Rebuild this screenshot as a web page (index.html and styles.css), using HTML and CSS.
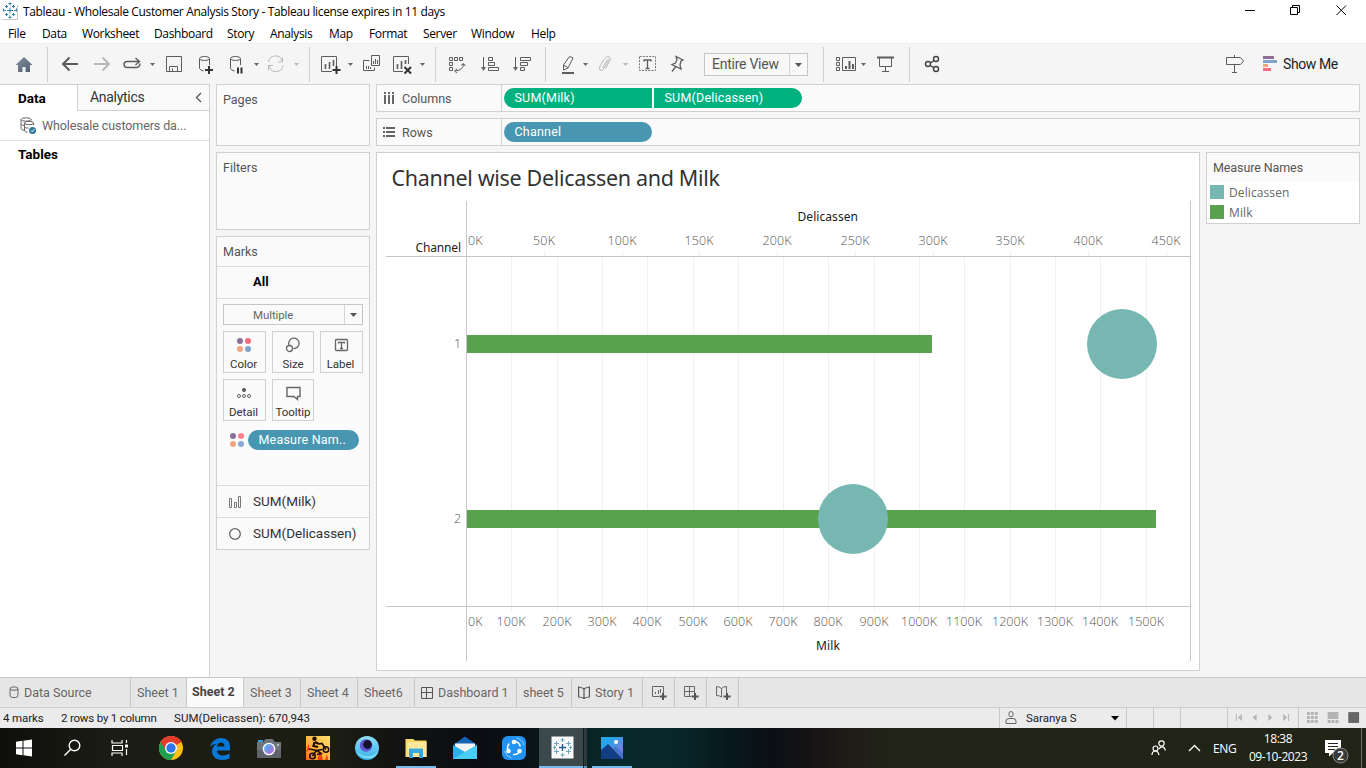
FILE: index.html
```html
<!DOCTYPE html>
<html lang="en">
<head>
<meta charset="utf-8">
<title>Tableau - Wholesale Customer Analysis Story</title>
<link rel="stylesheet" href="styles.css">
</head>
<body>
<div class="app">
  <header class="titlebar">
    <svg class="app-logo" width="16" height="18" viewBox="0 0 16 18"><path d="M.5 17.500h15V3" fill="none" stroke="#c8c8c8"/><path d="M7 6v6M4 9h6M7 1v3M7 14v3M1 9h2M11 9h2.500M3.500 3.500v3M2 5h3M10.500 3.500v3M9 5h3M3.500 11.500v3M2 13h3M10.500 11.500v3M9 13h3M5.500 2h3M5.500 16h3M.5 7v3M13.500 7v3" transform="translate(1 -.5)" stroke="#2f7fae" fill="none"/></svg>
    <span class="title-text">Tableau - Wholesale Customer Analysis Story - Tableau license expires in 11 days</span>
    <svg class="win-buttons" width="116" height="24" viewBox="1240 0 116 24" fill="none" stroke="#000"><path d="M1245 10.500h10"/><path d="M1290.500 7.500h7v7h-7zM1292.500 7.500v-2h7v7h-2M1336.500 5.500l9.500 9.500M1346 5.500l-9.500 9.500"/></svg>
  </header>
  <nav class="menubar"><span>File</span><span>Data</span><span>Worksheet</span><span>Dashboard</span><span>Story</span><span>Analysis</span><span>Map</span><span>Format</span><span>Server</span><span>Window</span><span>Help</span></nav>

  <div class="toolbar">
    <svg width="47" height="40" viewBox="0 44 47 40"><defs><linearGradient id="home" x1="0" y1="0" x2="1" y2="1"><stop offset="0" stop-color="#8492a3"/><stop offset="1" stop-color="#525d6d"/></linearGradient></defs><path d="M24 57l8.500 8H30v7h-4.500v-5h-3v5H18v-7h-2.500z" fill="url(#home)"/></svg>
    <i class="sep"></i>
    <svg class="ico" width="38" height="40" viewBox="48 44 38 40"><path d="M78 64H63M69.500 57.500L63 64l6.500 6.500" stroke-width="2"/></svg>
    <svg class="ico off" width="31" height="40" viewBox="86 44 31 40"><path d="M94 64h15M102.500 57.500L109 64l-6.500 6.500" stroke-width="2"/></svg>
    <svg class="ico" width="41" height="40" viewBox="117 44 41 40"><path d="M133 67.500h3.500a4 4 0 0 0 3.500-4M139 61.500h-12a3 3 0 0 0 0 6h8M135.500 58l4 3.500-4 3.500" stroke-width="1.400"/><path class="caret" d="M150 63h5l-2.500 3z"/></svg>
    <svg class="ico" width="32" height="40" viewBox="158 44 32 40"><path d="M166.500 56.500h15v15h-15zM169.500 71v-4.500h8V71M172.500 68.500V71"/></svg>
    <svg class="ico" width="30" height="40" viewBox="190 44 30 40"><ellipse cx="204.500" cy="58.500" rx="5" ry="2"/><path d="M199.500 58.500v10q1 2 4 2.500M209.500 58.500V65"/><path class="plus" d="M209 66v8M205 70h8"/></svg>
    <svg class="ico" width="42" height="40" viewBox="220 44 42 40"><ellipse cx="235.500" cy="58.500" rx="5" ry="2"/><path d="M230.500 58.500v10q1 2 4 2.500M240.500 58.500V65"/><path class="plus" d="M238 67.500v6M241.500 67.500v6"/><path class="caret" d="M254 63h5l-2.500 3z"/></svg>
    <svg class="ico off" width="47" height="40" viewBox="262 44 47 40"><path d="M268.500 62a7 7 0 0 1 13.500-1.500l.5 1M282.500 57.500v4.500h-4.500M283 65.500a7 7 0 0 1-13.500 1.500l-.5-1M268.500 70v-4.500h4.500"/><path class="caret" d="M294 63h5l-2.500 3z"/></svg>
    <i class="sep"></i>
    <svg class="ico" width="47" height="40" viewBox="310 44 47 40"><path d="M332 71.500h-10.500v-15h15V66"/><path d="M325.500 64v5M329.500 62v7M333.500 60v6" stroke-width="1.600"/><path class="plus" d="M336.500 66v8M332.500 70h8"/><path class="caret" d="M348 63h5l-2.500 3z"/></svg>
    <svg class="ico" width="30" height="40" viewBox="357 44 30 40"><path d="M371.500 55.500h8v10h-8zM369.500 60.500h-6v10h11v-3M366.500 66v3M368.500 66v3M370.500 67v2M373.500 61v3M375.500 59v5M377.500 60v4" /></svg>
    <svg class="ico" width="48" height="40" viewBox="387 44 48 40"><path d="M403 71.500h-9.500v-15h15V64"/><path d="M397.500 64v5M401.500 61v8M405.500 60v4" stroke-width="1.600"/><path class="plus" d="M404.500 67l6.500 6.500M411 67l-6.500 6.500"/><path class="caret" d="M420 63h5l-2.500 3z"/></svg>
    <i class="sep"></i>
    <svg class="ico" width="38" height="40" viewBox="436 44 38 40"><path d="M449.500 57.500h3v3h-3zM454.500 57.500h3v3h-3zM459.500 57.500h3v3h-3zM449.500 62.500h3v3h-3zM449.500 67.500h3v3h-3zM463.500 64q0 6-8 7M461 65.500l2.500-2 2 2.500M457 69l-2.500 2 2.500 2" /></svg>
    <svg class="ico" width="32" height="40" viewBox="474 44 32 40"><path d="M483.500 57v12M488.500 57.500h4v3h-4zM488.500 62.500h6v3h-6zM488.500 67.500h10v3h-10z"/><path class="caret" d="M481 67h5l-2.500 4z"/></svg>
    <svg class="ico" width="39" height="40" viewBox="506 44 39 40"><path d="M515.500 57v12M520.500 57.500h10v3h-10zM520.500 62.500h7v3h-7zM520.500 67.500h4v3h-4z"/><path class="caret" d="M513 67h5l-2.500 4z"/></svg>
    <i class="sep"></i>
    <svg class="ico" width="44" height="40" viewBox="546 44 44 40"><path d="M569.500 56.500l3.500 1.500-5 10-4.500 2v-5zM564 65.500l4 2"/><path d="M562 73h12" stroke-width="2"/><path class="caret" d="M583 63h5l-2.500 3z"/></svg>
    <svg class="ico off" width="42" height="40" viewBox="590 44 42 40"><path d="M602.500 68l5-8.500q1.500-1 1 1l-4.500 8q-2 3-4 1.500-1.500-1.500 0-4l4.500-7.500q3-3.500 5-1.500 2 1.500 0 4.500l-4 7"/><path class="caret" d="M623 63h5l-2.500 3z"/></svg>
    <svg class="ico" width="33" height="40" viewBox="632 44 33 40"><path d="M639.500 56.500h16v14h-16z" stroke-dasharray="2 1.200" stroke="#777"/><path d="M644 61.500v-1.500h7v1.500M647.500 60v8M645.500 68.500h4" stroke-width="1.300"/></svg>
    <svg class="ico" width="39" height="40" viewBox="665 44 39 40"><path d="M676 56.500l7 3.500-2 1-1 4 1 4-9-4.500 3.500-1.500 1.500-3.500zM675.500 67l-3.500 4.500" stroke-width="1.300"/></svg>
    <div class="fit-select"><span>Entire View</span><svg width="18" height="21" viewBox="0 0 18 21"><path d="M.5 0v21" stroke="#d4d4d4"/><path d="M6 9h7l-3.500 4z" fill="#555"/></svg></div>
    <i class="sep"></i>
    <svg class="ico" width="48" height="40" viewBox="824 44 48 40"><path d="M836.500 57.500h3v3h-3zM836.500 62.500h3v3h-3zM836.500 67.500h3v3h-3zM842.500 57.500h13v13h-13z"/><path d="M846 66v3M849.500 61v8M853 64v5" stroke-width="2"/><path class="caret" d="M861 63h5l-2.500 3z"/></svg>
    <svg class="ico" width="37" height="40" viewBox="872 44 37 40"><path d="M877 57.500h17" stroke-width="2"/><path d="M879.500 58v8.500h12V58M885.500 67v4.500M882 71.500h7" /></svg>
    <i class="sep"></i>
    <svg class="ico" width="40" height="40" viewBox="910 44 40 40"><g stroke-width="1.400" stroke="#444"><circle cx="928" cy="64" r="2.500"/><circle cx="936" cy="59" r="2.500"/><circle cx="936" cy="69" r="2.500"/><path d="M930.500 63l3.500-2.500M930.500 65.500l3.500 2.500"/></g></svg>
    <div class="show-me">
      <svg class="ico" width="20" height="40" viewBox="1225 44 20 40"><path d="M1226.500 57.500h14l3 3.500-3 3.500h-14zM1234.500 55v2M1234.500 65v7M1232 72.500h5"/></svg>
      <svg width="14" height="40" viewBox="1263 44 14 40"><path d="M1263 56h11v3h-11z" fill="#8b6f97"/><path d="M1263 60h14v3h-14z" fill="#7fa3cb"/><path d="M1263 64h5v3h-5z" fill="#f2a57f"/><path d="M1263 68h8v3h-8z" fill="#f56d7c"/></svg>
      <span>Show Me</span>
    </div>
  </div>

  <main class="workspace">
    <aside class="data-pane">
      <div class="pane-tabs">
        <span class="pane-tab active">Data</span>
        <span class="pane-tab">Analytics<svg width="7" height="12" viewBox="0 0 7 12"><path d="M6 1L1.500 5.500 6 10" fill="none" stroke="#555" stroke-width="1.300"/></svg></span>
      </div>
      <div class="source-row">
        <svg width="18" height="18" viewBox="19 116 18 18" fill="none" stroke="#666"><ellipse cx="26" cy="118.500" rx="5" ry="1.700"/><path d="M21 118.500v9q0 1.500 4 2M31 118.500v1M21 123q1 1.500 3 1.500"/><ellipse cx="29" cy="122" rx="4.500" ry="1.700"/><path d="M24.500 122v7q0 2 3 2.500M33.500 122v2M24.500 126q1 1.500 4 1"/><circle cx="32.500" cy="129.500" r="3.500" fill="#2c7a9e" stroke="none"/><path d="M31 129.500l1.200 1.200 2-2.500" stroke="#fff"/></svg>
        <span>Wholesale customers da...</span>
      </div>
      <div class="tables-head">Tables</div>
    </aside>

    <section class="cards">
      <div class="card pages">Pages</div>
      <div class="card filters">Filters</div>
      <div class="card marks">
        <div class="marks-head">Marks</div>
        <div class="marks-all">All</div>
        <div class="marks-body">
          <div class="mark-type"><span>Multiple</span><svg width="18" height="19" viewBox="0 0 18 19"><path d="M.5 0v19" stroke="#d4d4d4"/><path d="M6 8h7l-3.500 4z" fill="#555"/></svg></div>
          <div class="mark-grid">
            <div class="mark-btn"><svg width="16" height="16" viewBox="0 0 16 16"><circle cx="4" cy="4" r="3" fill="#8b6f97"/><circle cx="12" cy="4" r="3" fill="#f56d7c"/><circle cx="4" cy="12" r="3" fill="#f2a57f"/><circle cx="12" cy="12" r="3" fill="#7fa3cb"/></svg><span>Color</span></div>
            <div class="mark-btn mid-col"><svg width="16" height="16" viewBox="0 0 16 16" fill="none" stroke="#666" stroke-width="1.300"><path d="M4 8A5.200 5.200 0 1 1 8.500 11.500"/><circle cx="4.500" cy="11.500" r="3"/></svg><span>Size</span></div>
            <div class="mark-btn"><svg width="16" height="16" viewBox="0 0 16 16" fill="none" stroke="#666"><rect x="2.500" y="2.500" width="12" height="11" rx="1" stroke-width="1.300"/><path d="M5.500 6.500V5.500h6v1M8.500 5.500v5.500M7 11.500h3" stroke-width="1.300"/></svg><span>Label</span></div>
            <div class="mark-btn"><svg width="16" height="16" viewBox="0 0 16 16" fill="none" stroke="#666"><circle cx="8" cy="5" r="2" fill="#555" stroke="none"/><circle cx="3" cy="11" r="1.500"/><circle cx="8" cy="11" r="1.500"/><circle cx="13" cy="11" r="1.500"/></svg><span>Detail</span></div>
            <div class="mark-btn mid-col"><svg width="16" height="16" viewBox="0 0 16 16" fill="none" stroke="#666" stroke-width="1.400"><path d="M2 2.500h13v9h-2.500v3L9 11.500H2z"/></svg><span>Tooltip</span></div>
          </div>
          <div class="mark-pill-row">
            <svg width="14" height="14" viewBox="1 1 14 14"><circle cx="4" cy="4" r="3" fill="#8b6f97"/><circle cx="12" cy="4" r="3" fill="#f8828d"/><circle cx="4" cy="12" r="3" fill="#f2a57f"/><circle cx="12" cy="12" r="3" fill="#8aaad2"/></svg>
            <span class="pill dim">Measure Nam..</span>
          </div>
        </div>
        <div class="marks-item"><svg width="14" height="14" viewBox="0 0 14 14" fill="none" stroke="#777"><path d="M.5 3.500h2v9h-2zM5.500 7.500h2v5h-2zM9.500 1.500h2v11h-2z"/></svg>SUM(Milk)</div>
        <div class="marks-item"><svg width="14" height="14" viewBox="0 0 14 14" fill="none" stroke="#666" stroke-width="1.300"><circle cx="6" cy="7" r="5.300"/></svg>SUM(Delicassen)</div>
      </div>
    </section>

    <section class="stage">
      <div class="shelf"><div class="shelf-name"><svg width="13" height="13" viewBox="0 0 13 13" fill="#666"><path d="M1 0h2v2H1zM1 3h2v9H1zM5 0h2v2H5zM5 3h2v9H5zM9 0h2v2H9zM9 3h2v9H9z"/></svg>Columns</div><span class="pill mea left">SUM(Milk)</span><span class="pill mea right">SUM(Delicassen)</span></div>
      <div class="shelf"><div class="shelf-name"><svg width="13" height="13" viewBox="0 0 13 13" fill="#666"><path d="M0 1h2v2H0zM3 1h9v2H3zM0 5h2v2H0zM3 5h9v2H3zM0 9h2v2H0zM3 9h9v2H3z"/></svg>Rows</div><span class="pill dim">Channel</span></div>
      <div class="view-row">
        <div class="view">
          <svg class="chart" width="822" height="517" viewBox="377 153 822 517">
            <text class="chart-title" x="391.500" y="186" textLength="328.500">Channel wise Delicassen and Milk</text>
            <path class="grid" d="M511.500 257v354M557.500 257v354M602.500 257v354M647.500 257v354M693.500 257v354M738.500 257v354M783.500 257v354M828.500 257v354M874.500 257v354M919.500 257v354M964.500 257v354M1010.500 257v354M1055.500 257v354M1100.500 257v354M1146.500 257v354"/>
            <path class="grid" d="M544.500 251v5M622.500 251v5M699.500 251v5M777.500 251v5M855.500 251v5M933.500 251v5M1010.500 251v5M1088.500 251v5M1166.500 251v5"/>
            <path class="axis" d="M466.500 201v460M1190.500 201v460M386 256.500h804M386 606.500h804"/>
            <g class="heading">
              <text x="415.500" y="252" textLength="45.500">Channel</text>
              <text x="797.500" y="221" textLength="60.500">Delicassen</text>
              <text x="816" y="650" textLength="24">Milk</text>
            </g>
            <g class="tick">
              <text x="454" y="348">1</text><text x="454" y="523">2</text>
              <text x="468" y="245" textLength="14.500">0K</text>
              <g class="mid">
                <text x="544" y="245" textLength="22">50K</text><text x="622" y="245" textLength="29">100K</text><text x="699" y="245" textLength="29">150K</text><text x="777" y="245" textLength="29">200K</text><text x="855" y="245" textLength="29">250K</text><text x="933" y="245" textLength="29">300K</text><text x="1010" y="245" textLength="29">350K</text><text x="1088" y="245" textLength="29">400K</text><text x="1166" y="245" textLength="29">450K</text>
                <text x="511" y="626" textLength="29">100K</text><text x="557" y="626" textLength="29">200K</text><text x="602" y="626" textLength="29">300K</text><text x="647" y="626" textLength="29">400K</text><text x="693" y="626" textLength="29">500K</text><text x="738" y="626" textLength="29">600K</text><text x="783" y="626" textLength="29">700K</text><text x="828" y="626" textLength="29">800K</text><text x="874" y="626" textLength="29">900K</text><text x="919" y="626" textLength="36">1000K</text><text x="964" y="626" textLength="36">1100K</text><text x="1010" y="626" textLength="36">1200K</text><text x="1055" y="626" textLength="36">1300K</text><text x="1100" y="626" textLength="36">1400K</text><text x="1146" y="626" textLength="36">1500K</text>
              </g>
              <text x="468" y="626" textLength="14.500">0K</text>
            </g>
            <path class="milk" d="M467 335h465v18H467zM467 510h689v18H467z"/>
            <circle class="delicassen" cx="1122" cy="344" r="35"/>
            <circle class="delicassen" cx="853" cy="519" r="35"/>
          </svg>
        </div>
        <div class="legend">
          <div class="legend-head">Measure Names</div>
          <div class="legend-row"><i class="swatch teal"></i>Delicassen</div>
          <div class="legend-row"><i class="swatch green"></i>Milk</div>
        </div>
      </div>
    </section>
  </main>

  <div class="sheet-tabs">
    <span class="source"><svg width="10" height="13" viewBox="0 0 10 13" fill="none" stroke="#666"><rect x="1" y="1" width="8" height="10.500" rx="2.500"/><path d="M1 3.500q4 1.600 8 0"/></svg>Data Source</span>
    <span>Sheet 1</span><span class="active">Sheet 2</span><span>Sheet 3</span><span>Sheet 4</span><span>Sheet6</span>
    <span class="dash"><svg width="12" height="12" viewBox="0 0 12 12" fill="none" stroke="#555" stroke-width="1"><path d="M.5.500h11v11H.5zM5.500.500v11M.5 5.500h11"/></svg>Dashboard 1</span>
    <span>sheet 5</span>
    <span class="dash"><svg width="12" height="13" viewBox="0 0 12 13" fill="none" stroke="#555" stroke-width="1.200"><path d="M.6 1q3.400.2 5.400 2 2-1.800 5.400-2v10Q8 11 6 12.500 4 11 .6 11zM6 3v9"/></svg>Story 1</span>
    <span class="new"><svg width="16" height="16" viewBox="0 0 16 16" fill="none" stroke="#666"><path d="M8 11.500H1.500v-10h11V8M4.500 7v2M7.500 5v4M9.500 4v4"/><path d="M12 8v7M8.500 11.500h7" stroke-width="2" stroke="#555"/></svg></span>
    <span class="new"><svg width="16" height="16" viewBox="0 0 16 16" fill="none" stroke="#666"><path d="M8 11.500H1.500v-10h10V8M6.500 1.500v10M1.500 6.500h10"/><path d="M12 8v7M8.500 11.500h7" stroke-width="2" stroke="#555"/></svg></span>
    <span class="new"><svg width="16" height="16" viewBox="0 0 16 16" fill="none" stroke="#666"><path d="M1.500 1.500q3 0 5 2 2-2 5-2V8M1.500 1.500v9q3 0 5 1.500M6.500 3.500V12"/><path d="M12 8v7M8.500 11.500h7" stroke-width="2" stroke="#555"/></svg></span>
  </div>

  <div class="statusbar">
    <span class="st-marks">4 marks</span><span class="st-rows">2 rows by 1 column</span><span class="st-sum">SUM(Delicassen): 670,943</span>
    <div class="user"><svg width="12" height="14" viewBox="0 0 12 14" fill="none" stroke="#666"><ellipse cx="6" cy="3.200" rx="2.200" ry="2.700"/><path d="M1 12.500V10q0-2.500 3-2.500h4q3 0 3 2.500v2.500z"/></svg><span>Saranya S</span><svg class="drop" width="8" height="5" viewBox="0 0 8 5"><path d="M0 0h8L4 4.500z"/></svg></div>
    <i class="cell c1"></i><i class="cell c1"></i><i class="cell c2"></i>
    <svg class="cell" width="71" height="20" viewBox="1228 708 71 20" fill="#b4b4b4"><path d="M1236 714h1v7h-1zM1242 714v7l-4-3.500zM1257 714v7l-4-3.500zM1269 714v7l4-3.500zM1284 714v7l4-3.500zM1289 714h1v7h-1z"/></svg>
    <svg class="cell" width="68" height="20" viewBox="1299 708 68 20" fill="#b4b4b4"><path d="M1307 712h3v3h-3zM1311 712h3v3h-3zM1315 712h3v3h-3zM1307 716h3v3h-3zM1311 716h3v3h-3zM1315 716h3v3h-3zM1307 720h3v3h-3zM1311 720h3v3h-3zM1315 720h3v3h-3zM1328 712h11v7h-11zM1328 720h3v3h-3zM1332 720h3v3h-3zM1336 720h3v3h-3z"/><path d="M1349 712h11v11h-11z" fill="#666"/></svg>
  </div>

  <footer class="taskbar">
    <svg width="49" height="40" viewBox="0 728 49 40" fill="#fff"><path d="M16 741.800l6.500-1v6.700H16zM23.500 740.700L32 739.500v8h-8.500zM16 748.500h6.500v6.700l-6.500-1zM23.500 748.500H32v8l-8.500-1.200z"/></svg>
    <svg width="48" height="40" viewBox="49 728 48 40" fill="none" stroke="#fff" stroke-width="1.400"><circle cx="74.500" cy="745.500" r="5.300"/><path d="M70.500 749.500l-6 6"/></svg>
    <svg width="49" height="40" viewBox="97 728 49 40" fill="none" stroke="#fff" stroke-width="1.200"><path d="M112 740v3h10v-3M112.500 745.500h10v5h-10zM112 756v-3h10v3M126.500 740v3M126.500 749v6"/><path d="M125 744.500h3v3h-3z" fill="#fff" stroke="none"/></svg>
    <svg width="49" height="40" viewBox="146 728 49 40"><circle cx="171" cy="748" r="12" fill="#fbc116"/><path d="M171 748L160.600 742A12 12 0 0 1 181.400 742z" fill="#e33b2e"/><path d="M160.600 742A12 12 0 0 0 171 760l5.500-9.500L171 748z" fill="#1fa050"/><path d="M171 742h10.400A12 12 0 0 0 160.600 742l5 8z" fill="#e33b2e"/><circle cx="171" cy="748" r="6" fill="#fff"/><circle cx="171" cy="748" r="4.700" fill="#2f77ea"/></svg>
    <svg width="49" height="40" viewBox="195 728 49 40"><path d="M210 746.500Q213 738 221.500 738q8.500.5 8.500 9v3.500h-13q.5 5 6 5 3 0 6.500-2v5Q226 760 221.500 760q-8.500-.5-9.500-8 0-6 5-8.500-4 .5-7 3zM217 746.500h7.500q0-4-3.500-4-3.500.3-4 4z" fill="#0879d9" fill-rule="evenodd"/></svg>
    <svg width="49" height="40" viewBox="244 728 49 40"><defs><linearGradient id="lens" x1="0" y1="0" x2="1" y2="1"><stop offset="0" stop-color="#43bdf0"/><stop offset="1" stop-color="#c062dd"/></linearGradient></defs><path d="M258 740h5v3h-5z" fill="#28a3d8"/><path d="M257 742h6l2.500-3h7l2.500 3h6v16h-24z" fill="#6d747a"/><path d="M257 750h24v8h-24z" fill="#5d646a"/><circle cx="269" cy="749" r="6.300" fill="#fff"/><circle cx="269" cy="749" r="4.900" fill="url(#lens)"/><path d="M277 744h2v2h-2z" fill="#bbb"/></svg>
    <svg width="49" height="40" viewBox="293 728 49 40"><defs><linearGradient id="bike" x1="1" y1="0" x2="0" y2="1"><stop offset="0" stop-color="#ffe36e"/><stop offset=".7" stop-color="#ffa62c"/><stop offset="1" stop-color="#f06a1a"/></linearGradient></defs><path d="M306 736h24v24h-24z" fill="url(#bike)"/><path d="M318 760q-1-5 4-8-1 4 1 8zM306 752l3-9 0 7zM325 760l2-6 1 6z" fill="#ee3f12"/><g stroke="#1c0c05" fill="none"><circle cx="312.500" cy="756" r="2.700" stroke-width="1.600"/><circle cx="326" cy="749.500" r="2.700" stroke-width="1.600"/><path d="M312.500 756l4-5.500 6-1M326 749.500l-4-6-3 .5M309 749l8 1.500 4 3-4 1" stroke-width="1.700"/><path d="M314.500 742l-1 4 4.500 1M315 742l4 2" stroke-width="2.200"/></g><circle cx="314.500" cy="738.800" r="2.200" fill="#1c0c05"/></svg>
    <svg width="49" height="40" viewBox="342 728 49 40"><defs><linearGradient id="swirl" x1="0" y1="0" x2="0" y2="1"><stop offset="0" stop-color="#8fdcf5"/><stop offset="1" stop-color="#36b2ea"/></linearGradient></defs><circle cx="367" cy="748" r="12" fill="url(#swirl)"/><path d="M357 752q6 5 13 4t8-7q0 8-8 9.500-9 .5-13-6.500z" fill="#7fdcf6"/><circle cx="366" cy="745.500" r="6.200" fill="#6156d8"/><circle cx="367.500" cy="744.500" r="4.400" fill="#15122e"/></svg>
    <svg width="49" height="40" viewBox="391 728 49 40"><path d="M405.500 739h8l1 1.500h12V757h-21z" fill="#fbd764"/><path d="M407.500 742h19V757h-19z" fill="#ffe89b"/><path d="M409 748.500h14V758h-4v-5h-6v5h-4z" fill="#35a8e0"/><path d="M396 766h40v2h-40z" fill="#76b9ed"/></svg>
    <svg width="49" height="40" viewBox="440 728 49 40"><path d="M453 745l12-8.500 12 8.500z" fill="#1565b5"/><path d="M455 743.500h20v9h-20z" fill="#f4f4f4"/><path d="M453 745l12 7 12-7v14h-24z" fill="#2bb0e8"/><path d="M453 759l24-14v14z" fill="#47cdf6"/></svg>
    <svg width="50" height="40" viewBox="489 728 50 40"><rect x="502" y="736" width="24" height="24" rx="6" fill="#2293f3"/><g fill="none" stroke="#fff"><circle cx="514" cy="748" r="6.500" stroke-width="1.600" stroke-dasharray="9 4.600" stroke-dashoffset="-2"/><path d="M504.500 751a10 10 0 0 0 7 7M516.500 738a10 10 0 0 1 7.500 7" stroke="#8fcbfa"/></g><g fill="#fff"><circle cx="514" cy="742" r="2.300"/><circle cx="508.500" cy="751" r="2.300"/><circle cx="519.500" cy="751" r="2.300"/></g></svg>
    <svg width="49" height="40" viewBox="539 728 49 40"><path d="M539 728h44v40h-44z" fill="#3b494c"/><path d="M584 728h3v40h-3z" fill="#2d3a3d"/><path d="M539 766h44v2h-44z" fill="#76b9ed"/><path d="M584 766h3v2h-3z" fill="#5d93bd"/><path d="M551.500 736.500h22v22h-22z" fill="#fafafa"/><path d="M562.500 744v7M559 747.500h7" stroke="#1f5f93" stroke-width="1.400"/><path d="M556.500 741v5M554 743.500h5M568.500 741v5M566 743.500h5M556.500 749v5M554 751.500h5M568.500 749v5M566 751.500h5M562.500 738v4M560.500 740h4M562.500 753v4M560.500 755h4M554.500 745.500v4M553 747.500h3M570.500 745.500v4M569 747.500h3" stroke="#6fa3c2"/></svg>
    <svg width="50" height="40" viewBox="588 728 50 40"><defs><linearGradient id="sky" x1="0" y1="0" x2="1" y2="1"><stop offset=".3" stop-color="#2ba3e6"/><stop offset="1" stop-color="#9a6be0"/></linearGradient></defs><path d="M601 737h22v22h-22z" fill="url(#sky)"/><path d="M601 750l7-6 15 15h-22z" fill="#123f84"/><path d="M613 749l3-2.500 7 6.500v6z" fill="#4774cd"/><circle cx="616" cy="742" r="2" fill="#fff"/><path d="M592 766h40v2h-40z" fill="#76b9ed"/></svg>
    <div class="tray">
      <svg width="16" height="16" viewBox="0 0 16 16" fill="none" stroke="#fff" stroke-width="1.200"><circle cx="10.500" cy="3.500" r="2.700"/><path d="M8 9q2.500-3.500 5-1.500l1.500 3"/><circle cx="4.500" cy="8.500" r="2.500"/><path d="M1 15q0-4 3.500-4 2.500 0 3.500 4"/></svg>
      <svg class="chev" width="13" height="8" viewBox="0 0 13 8" fill="none" stroke="#fff" stroke-width="1.300"><path d="M1 7l5.500-5.500L12 7"/></svg>
      <span class="lang">ENG</span>
      <div class="clock"><span>18:38</span><span>09-10-2023</span></div>
      <svg class="notif" width="41" height="40" viewBox="1325 728 41 40"><path d="M1325 740h16v13h-8l-4 3.500v-3.500h-4z" fill="#fff"/><path d="M1328 743.500h10M1328 746.500h10M1328 749.500h7" stroke="#24261a"/><circle cx="1340.500" cy="755.500" r="7.500" fill="#3a3a3a" stroke="#8a8a8a"/><text x="1337" y="760" class="badge">2</text><path d="M1361.500 728v40" stroke="#707268"/></svg>
    </div>
  </footer>
</div>
</body>
</html>
```
FILE: styles.css
```css
* { box-sizing: border-box; }
body { margin: 0; background: #f5f5f5; font-family: Roboto, "Liberation Sans", sans-serif; color: #333; }
svg { display: block; flex: none; }
i { flex: none; }
span { white-space: nowrap; }
.app { width: 1366px; height: 768px; display: flex; flex-direction: column; overflow: hidden; }

.titlebar { height: 24px; background: #fff; display: flex; align-items: center; padding: 0 10px 0 2px; color: #000; font: 12px "Open Sans", sans-serif; }
.app-logo { margin-top: -2px; }
.title-text { margin: -1px 0 0 5px; letter-spacing: -0.345px; }
.win-buttons { margin-left: auto; }
.menubar { height: 20px; background: #fff; border-bottom: 1px solid #eee; padding-left: 8px; display: grid; grid-template-columns: 34px 40px 72px 73px 43px 59px 40px 54px 48px 60px 40px; line-height: 19px; color: #000; font-family: "Open Sans", sans-serif; font-size: 12px; letter-spacing: -0.35px; }

.toolbar { height: 40px; flex: none; display: flex; align-items: center; background: #f5f5f5; }
.sep { width: 1px; height: 35px; background: #d0d0d0; }
.ico { fill: none; stroke: #5c5c5c; }
.ico.off { stroke: #b8b8b8; }
.ico .caret { fill: #666; stroke: none; }
.ico.off .caret { fill: #b8b8b8; }
.ico .plus { stroke: #333; stroke-width: 2; }
.fit-select { width: 104px; height: 23px; margin-right: 15px; border: 1px solid #c6c6c6; background: #f8f8f8; display: flex; justify-content: space-between; align-items: center; padding-left: 7px; font-size: 14px; color: #555; letter-spacing: -0.25px; }
.show-me { margin-left: auto; padding-right: 29px; display: flex; align-items: center; color: #222; font-size: 14px; letter-spacing: -0.4px; }
.show-me .ico { margin-right: 18px; }
.show-me span { width: 54px; margin-left: 6px; }

.workspace { height: 593px; flex: none; display: flex; }
.data-pane { width: 210px; flex: none; background: #fff; border-top: 1px solid #d0d0d0; border-right: 1px solid #d0d0d0; }
.pane-tabs { display: flex; height: 26px; font-size: 14px; line-height: 25px; }
.pane-tab { flex: 1; background: #fafafa; border-left: 1px solid #d0d0d0; border-bottom: 1px solid #d0d0d0; padding: 0 7px 0 12px; display: flex; justify-content: space-between; align-items: center; letter-spacing: -0.3px; }
.pane-tab.active { flex: 0 0 77px; background: #fff; border: 0; padding-left: 18px; font-size: 13.5px; font-weight: bold; letter-spacing: 0; color: #000; }
.source-row { height: 30px; border-bottom: 1px solid #ddd; display: flex; align-items: center; gap: 5px; padding-left: 19px; font-size: 12.5px; color: #666; letter-spacing: -0.1px; }
.tables-head { padding: 5px 18px; font-size: 13.5px; line-height: 17px; font-weight: bold; color: #000; }

.cards { width: 154px; margin-left: 6px; flex: none; display: flex; flex-direction: column; gap: 6px; }
.card { background: #fafafa; border: 1px solid #d0d0d0; font-size: 12.5px; line-height: 15px; color: #555; padding: 7px 6px; letter-spacing: 0; }
.pages { height: 62px; }
.filters { height: 78px; }
.marks { height: 314px; padding: 0; }
.marks-head { height: 30px; padding: 7px 6px; border-bottom: 1px solid #ddd; }
.marks-all { height: 32px; line-height: 29px; padding-left: 36px; border-bottom: 1px solid #ddd; font-size: 13px; font-weight: bold; color: #000; }
.marks-body { height: 186px; padding: 5px 6px; }
.mark-type { height: 21px; border: 1px solid #c6c6c6; display: flex; justify-content: space-between; padding-left: 29px; font-size: 11.5px; line-height: 20px; letter-spacing: -0.1px; color: #666; }
.mark-grid { display: grid; grid-template-columns: 43px 42px 43px; gap: 6px; margin-top: 6px; }
.mark-btn { height: 42px; border: 1px solid #d0d0d0; display: flex; flex-direction: column; align-items: center; padding: 5px 2px 0 0; font-size: 11.5px; line-height: 13px; letter-spacing: -0.05px; color: #333; }
.mark-btn.mid-col { padding-right: 0; }
.mark-btn span { margin-top: 5px; }
.mark-pill-row { display: flex; align-items: center; gap: 4px; margin-top: 9px; padding-left: 7px; }
.mark-pill-row .pill { width: 111px; margin: 0; }
.marks-item { height: 32px; border-top: 1px solid #ddd; padding-left: 12px; display: flex; align-items: center; gap: 10px; font-size: 13.5px; letter-spacing: 0; color: #333; }

.pill { display: block; width: 148px; height: 20px; line-height: 20px; border-radius: 10px; padding-left: 10.5px; font-size: 12.5px; letter-spacing: 0.2px; color: #fff; }
.pill.dim { background: #4996b2; }
.pill.mea { background: #00b180; }
.pill.left { border-radius: 10px 0 0 10px; margin-right: 2px; }
.pill.right { border-radius: 0 10px 10px 0; }

.stage { width: 984px; margin-left: 6px; display: flex; flex-direction: column; gap: 6px; }
.shelf { height: 28px; background: #fafafa; border: 1px solid #d0d0d0; display: flex; align-items: center; font-size: 12.5px; color: #555; }
.shelf-name { width: 125px; height: 26px; border-right: 1px solid #d0d0d0; margin-right: 2px; padding-left: 6px; display: flex; align-items: center; gap: 6px; letter-spacing: 0; }
.view-row { display: flex; align-items: flex-start; gap: 6px; }
.view { width: 824px; height: 519px; border: 1px solid #d0d0d0; background: #fff; }
.legend { width: 154px; height: 72px; border: 1px solid #d0d0d0; background: #fff; font-size: 12.5px; color: #555; }
.legend-head { height: 29px; line-height: 29px; background: #fafafa; padding-left: 6px; letter-spacing: -0.1px; }
.legend-row { height: 20px; display: flex; align-items: center; gap: 5px; padding-left: 3px; font-family: "Open Sans", sans-serif; font-size: 12px; letter-spacing: 0.1px; color: #666; }
.swatch { width: 14px; height: 14px; }
.teal { background: #76b7b2; }
.green { background: #59a14f; }

.chart text { font-family: "Noto Sans", sans-serif; font-size: 12px; }
.chart .chart-title { font-size: 21.5px; fill: #333; }
.heading text { fill: #222; }
.tick text { font-family: "Open Sans", sans-serif; font-weight: 300; font-size: 12.5px; fill: #555; }
.mid text { text-anchor: middle; }
.grid { stroke: #f0f0f0; fill: none; }
.axis { stroke: #c6c6c6; fill: none; }
.milk { fill: #59a14f; }
.delicassen { fill: #76b7b2; }

.sheet-tabs { height: 31px; flex: none; background: #e6e6e6; border-top: 1px solid #c8c8c8; border-bottom: 1px solid #cfcfcf; display: grid; grid-template-columns: 131px 56px 57px 57px 57px 57px 102px 55px 71px 32px 32px 32px; font-size: 12.5px; color: #666; letter-spacing: 0; }
.sheet-tabs span { border-right: 1px solid #c8c8c8; display: flex; align-items: center; padding-left: 6px; }
.sheet-tabs .active { background: #fafafa; font-weight: bold; color: #444; padding: 0 0 2px 5px; }
.sheet-tabs .source { gap: 5px; padding-left: 9px; }
.sheet-tabs .dash { gap: 5px; }
.sheet-tabs .new { padding-left: 8px; }

.statusbar { height: 20px; flex: none; background: #ebebeb; display: flex; align-items: center; padding-left: 3px; font-size: 11.5px; letter-spacing: -0.1px; color: #222; }
.st-marks { width: 58px; }
.st-rows { width: 113px; letter-spacing: -0.2px; }
.st-sum { letter-spacing: 0.05px; }
.user { margin-left: auto; width: 127px; height: 20px; border-left: 1px solid #c8c8c8; display: flex; align-items: center; padding: 0 7px 0 5px; gap: 9px; letter-spacing: 0; }
.drop { margin-left: auto; }
.cell { height: 20px; border-left: 1px solid #c8c8c8; }
.c1 { width: 27px; }
.c2 { width: 47px; }

.taskbar { height: 40px; flex: none; display: flex; color: #fff; font-family: "Open Sans", sans-serif; font-size: 12px; background: linear-gradient(90deg, #0e0e0c 0, #1b1c13 110px, #1c1d13 330px, #121312 400px, #0a0d12 480px, #091517 540px, #08292b 610px, #08282b 670px, #08171c 735px, #0b0f15 770px, #151314 810px, #1e1b17 845px, #212317 890px, #222418 1366px); }
.tray { margin-left: auto; display: flex; align-items: center; }
.chev { margin-left: 21px; }
.lang { width: 25px; margin-left: 12px; letter-spacing: -0.4px; }
.clock { width: 64px; margin: 0 15px 0 8px; display: flex; flex-direction: column; align-items: center; line-height: 18px; letter-spacing: -0.45px; }
.badge { font: 600 12px "Open Sans", sans-serif; fill: #fff; }
```
